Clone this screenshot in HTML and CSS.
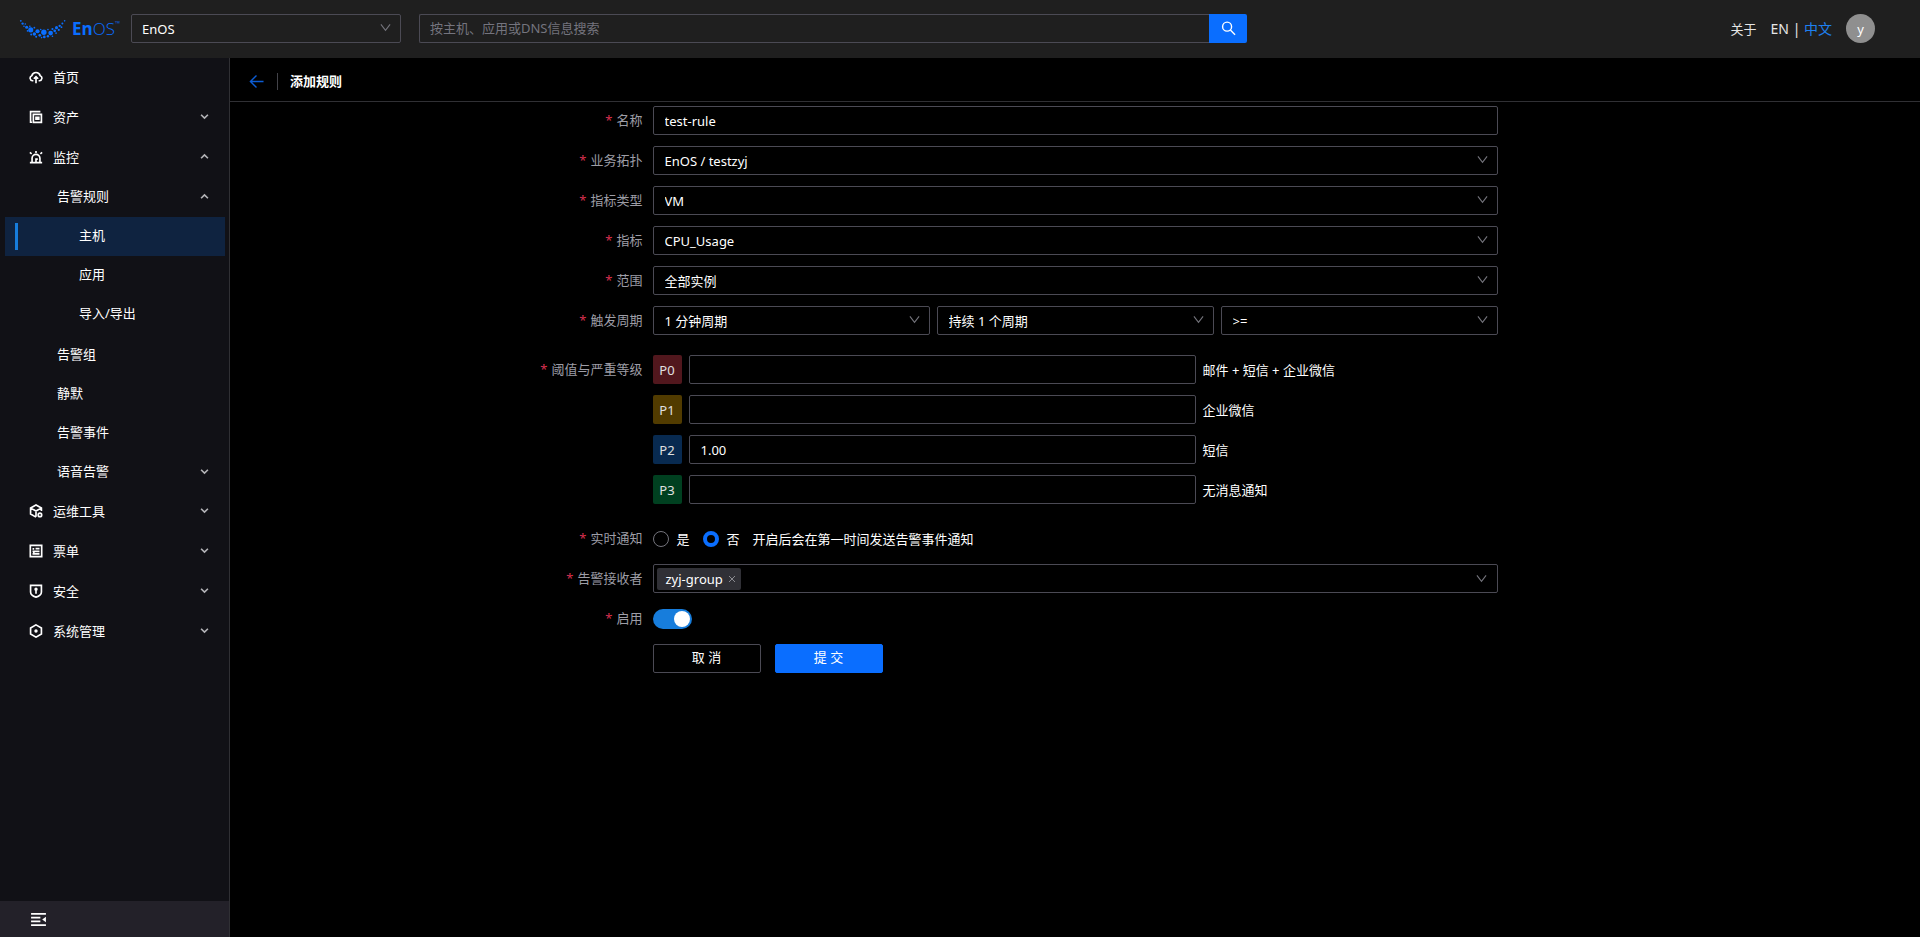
FILE: index.html
```html
<!DOCTYPE html>
<html lang="zh-CN">
<head>
<meta charset="utf-8">
<meta name="viewport" content="width=device-width, initial-scale=1">
<title>添加规则 - EnOS</title>
<link rel="stylesheet" href="styles.css">
</head>
<body>
<svg class="sprite" aria-hidden="true">
  <symbol id="chevron" viewBox="0 0 12 12"><path d="M1 2.500 6 9l5-6.500" fill="none" stroke="currentColor" stroke-width="1.200"/></symbol>
  <symbol id="caret" viewBox="0 0 10 10"><path d="M1.200 3 5 6.800 8.800 3" fill="none" stroke="currentColor" stroke-width="1.800"/></symbol>
</svg>
<header class="topbar">
  <a class="logo" href="#" aria-label="EnOS">
    <svg class="logo-mark" viewBox="0 0 52 22" fill="currentColor">
      <circle cx="2" cy="2" r="1"/><circle cx="4" cy="5" r="1.300"/><circle cx="7" cy="5.500" r=".9"/><circle cx="5.500" cy="8" r=".9"/><circle cx="8.500" cy="9" r="1.700"/><circle cx="12" cy="8" r=".9"/><circle cx="9.500" cy="13" r="1"/><circle cx="13" cy="12" r="2.800"/><circle cx="17" cy="9.500" r="1"/><circle cx="13.500" cy="17" r="1.100"/><circle cx="17" cy="16.500" r="1.900"/><circle cx="20.500" cy="13.500" r="2.300"/><circle cx="19" cy="19.500" r="1.100"/><circle cx="23" cy="18" r="1.500"/><circle cx="24" cy="11.500" r=".9"/><circle cx="27.500" cy="14.500" r="3"/><circle cx="25" cy="20.500" r=".9"/><circle cx="28" cy="19.800" r="1.500"/><circle cx="32" cy="19" r="1.300"/><circle cx="32" cy="11.500" r=".9"/><circle cx="35" cy="15.500" r="2.600"/><circle cx="37" cy="11" r="1.200"/><circle cx="39.500" cy="13" r="1.500"/><circle cx="37" cy="19" r=".9"/><circle cx="41" cy="15.500" r="1"/><circle cx="41.500" cy="9.500" r="1.700"/><circle cx="44" cy="12" r="1.200"/><circle cx="45" cy="7.500" r="1.300"/><circle cx="47" cy="9" r="1"/><circle cx="48" cy="5" r="1.100"/><circle cx="50.500" cy="2" r=".9"/>
    </svg>
    <span class="logo-text"><b>En</b>OS<sup>™</sup></span>
  </a>
  <div class="select topbar-org">
    <select aria-label="组织"><option>EnOS</option></select>
    <svg class="select-arrow"><use href="#chevron"/></svg>
  </div>
  <form class="search" role="search">
    <input type="text" aria-label="搜索" placeholder="按主机、应用或DNS信息搜索">
    <button type="button" aria-label="搜索">
      <svg viewBox="0 0 16 16" fill="none" stroke="currentColor" stroke-width="1.500"><circle cx="6.500" cy="6" r="4.800"/><path d="m10 9.700 5 5"/></svg>
    </button>
  </form>
  <div class="topbar-right">
    <a class="about" href="#">关于</a>
    <span class="lang"><a href="#">EN</a> | <a class="lang-on" href="#">中文</a></span>
    <span class="avatar">y</span>
  </div>
</header>
<div class="body">
  <aside class="sidebar">
    <nav class="menu">
      <a class="item" href="#"><svg class="icon" viewBox="0 0 16 16"><path d="M5 12.300H4A3 3 0 0 1 3.200 6.500a5 5 0 0 1 9.600 0A3 3 0 0 1 12 12.300h-1M8 15V8M5.500 10 8 7.500l2.500 2.500"/></svg>首页</a>
      <a class="item" href="#"><svg class="icon" viewBox="0 0 16 16"><path d="M3.500 14H1.800V1.800H13M5 5h9.200v9.200H5zM8 8.500h3.200v2H8z"/></svg>资产<svg class="caret"><use href="#caret"/></svg></a>
      <a class="item" href="#"><svg class="icon" viewBox="0 0 16 16"><path d="M1 14.500h14M3.500 14V9.500a4.500 4.500 0 0 1 9 0V14M8 3.500V1M3 4.500 1 2.800M13 4.500l2-1.700M8 14v-3.500h2"/></svg>监控<svg class="caret caret-up"><use href="#caret"/></svg></a>
      <a class="item sub" href="#">告警规则<svg class="caret caret-up"><use href="#caret"/></svg></a>
      <div class="submenu">
        <a class="item leaf active" href="#" aria-current="page">主机</a>
        <a class="item leaf" href="#">应用</a>
        <a class="item leaf" href="#">导入/导出</a>
      </div>
      <a class="item sub" href="#">告警组</a>
      <a class="item sub" href="#">静默</a>
      <a class="item sub" href="#">告警事件</a>
      <a class="item sub" href="#">语音告警<svg class="caret"><use href="#caret"/></svg></a>
      <a class="item" href="#"><svg class="icon" viewBox="0 0 16 16"><path d="M8 15 1.800 11.500v-7L8 1.200l6.200 3.300V8M2 4.700 8 8l6-3.300M8 8v6.500"/><circle cx="12.500" cy="12.500" r="2"/></svg>运维工具<svg class="caret"><use href="#caret"/></svg></a>
      <a class="item" href="#"><svg class="icon" viewBox="0 0 16 16"><path d="M1.500 1.500h13v13h-13zM5 4.500v2M7.500 5.300H12M4 8.500h8M4 11.300h8M5.500 8v4"/></svg>票单<svg class="caret"><use href="#caret"/></svg></a>
      <a class="item" href="#"><svg class="icon" viewBox="0 0 16 16"><path d="M1.800 1.500h12.400V9c0 3-3 5-6.200 6-3.200-1-6.200-3-6.200-6z"/><path d="M8 7v4"/><circle cx="8" cy="6" r="1"/></svg>安全<svg class="caret"><use href="#caret"/></svg></a>
      <a class="item" href="#"><svg class="icon" viewBox="0 0 16 16"><path d="m8 1 6.200 3.500v7L8 15l-6.200-3.500v-7z"/><circle cx="8" cy="8" r="1"/></svg>系统管理<svg class="caret"><use href="#caret"/></svg></a>
    </nav>
    <button class="collapse" type="button" aria-label="收起菜单">
      <svg viewBox="0 0 16 14" fill="currentColor"><path d="M0 0h16v2H0zM0 4h10v2H0zM0 8h10v2H0zM0 12h16v2H0zM16 4v6l-4-3z"/></svg>
    </button>
  </aside>
  <main class="content">
    <div class="page-head">
      <button class="back" type="button" aria-label="返回">
        <svg viewBox="0 0 16 16" fill="none" stroke="currentColor" stroke-width="1.500"><path d="M15.500 8H1.500M8 1.500 1.500 8 8 14.500"/></svg>
      </button>
      <span class="divider"></span>
      <h1>添加规则</h1>
    </div>
    <form class="form">
      <div class="row">
        <label for="name">名称</label>
        <div class="field"><input id="name" class="text" type="text" value="test-rule"></div>
      </div>
      <div class="row">
        <label for="topo">业务拓扑</label>
        <div class="field"><div class="select"><select id="topo"><option>EnOS / testzyj</option></select><svg class="select-arrow"><use href="#chevron"/></svg></div></div>
      </div>
      <div class="row">
        <label for="type">指标类型</label>
        <div class="field"><div class="select"><select id="type"><option>VM</option></select><svg class="select-arrow"><use href="#chevron"/></svg></div></div>
      </div>
      <div class="row">
        <label for="metric">指标</label>
        <div class="field"><div class="select"><select id="metric"><option>CPU_Usage</option></select><svg class="select-arrow"><use href="#chevron"/></svg></div></div>
      </div>
      <div class="row">
        <label for="scope">范围</label>
        <div class="field"><div class="select"><select id="scope"><option>全部实例</option></select><svg class="select-arrow"><use href="#chevron"/></svg></div></div>
      </div>
      <div class="row">
        <label for="period">触发周期</label>
        <div class="field">
          <div class="select"><select id="period"><option>1 分钟周期</option></select><svg class="select-arrow"><use href="#chevron"/></svg></div>
          <div class="select"><select aria-label="持续周期"><option>持续 1 个周期</option></select><svg class="select-arrow"><use href="#chevron"/></svg></div>
          <div class="select"><select aria-label="比较符"><option>&gt;=</option></select><svg class="select-arrow"><use href="#chevron"/></svg></div>
        </div>
      </div>
      <div class="levels">
        <div class="row">
          <label for="p0">阈值与严重等级</label>
          <div class="field"><span class="level level-0">P0</span><input id="p0" class="text threshold" type="text"><span>邮件 + 短信 + 企业微信</span></div>
        </div>
        <div class="row">
          <span></span>
          <div class="field"><span class="level level-1">P1</span><input class="text threshold" type="text" aria-label="P1"><span>企业微信</span></div>
        </div>
        <div class="row">
          <span></span>
          <div class="field"><span class="level level-2">P2</span><input class="text threshold" type="text" aria-label="P2" value="1.00"><span>短信</span></div>
        </div>
        <div class="row">
          <span></span>
          <div class="field"><span class="level level-3">P3</span><input class="text threshold" type="text" aria-label="P3"><span>无消息通知</span></div>
        </div>
      </div>
      <div class="row">
        <span class="label" id="notify">实时通知</span>
        <div class="field radios" role="radiogroup" aria-labelledby="notify">
          <label class="radio"><input type="radio" name="notify">是</label>
          <label class="radio"><input type="radio" name="notify" checked>否</label>
          <span>开启后会在第一时间发送告警事件通知</span>
        </div>
      </div>
      <div class="row">
        <label for="receivers">告警接收者</label>
        <div class="field">
          <div class="select tags">
            <span class="tag">zyj-group<button type="button" aria-label="移除 zyj-group"><svg viewBox="0 0 8 8" fill="none" stroke="currentColor"><path d="m1 1 6 6M7 1 1 7"/></svg></button></span>
            <input id="receivers" type="text">
            <svg class="select-arrow"><use href="#chevron"/></svg>
          </div>
        </div>
      </div>
      <div class="row">
        <label for="enabled">启用</label>
        <div class="field"><input id="enabled" class="switch" type="checkbox" role="switch" checked></div>
      </div>
      <div class="row">
        <span></span>
        <div class="field actions">
          <button class="btn" type="button">取 消</button>
          <button class="btn btn-primary" type="button">提 交</button>
        </div>
      </div>
    </form>
  </main>
</div>
</body>
</html>
```
FILE: styles.css
```css
:root {
  --blue: #0a6eff;
  --line: #4b4a54;
  --muted: #9d9da6;
  --control: 29px;
}

*, *::before, *::after { box-sizing: border-box; }

body {
  margin: 0;
  min-height: 100vh;
  display: flex;
  flex-direction: column;
  background: #000;
  color: #fff;
  font: 13px/20px "Noto Sans", "Noto Sans CJK SC", sans-serif;
}

a { color: inherit; text-decoration: none; }
input, select, button { font: inherit; color: inherit; margin: 0; }
button { border: 0; padding: 0; background: none; cursor: pointer; }
svg { display: block; flex: none; }

.sprite { display: none; }

/* Top bar */
.topbar {
  flex: none;
  display: flex;
  align-items: center;
  height: 58px;
  padding: 0 45px 1px 19px;
  background: #1f1f1f;
}

.logo {
  display: flex;
  align-items: center;
  gap: 6px;
  width: 112px;
  color: var(--blue);
}
.logo-mark { width: 47px; height: 20px; }
.logo-text {
  display: flex;
  font: 300 17px/24px "Open Sans", sans-serif;
}
.logo-text b { font-weight: 700; }
.logo-text sup { font-size: 7px; line-height: 14px; }

.search {
  display: flex;
  flex: 0 1 828px;
  height: var(--control);
  margin-left: 18px;
}
.search input {
  flex: 1;
  min-width: 0;
  padding: 0 10px 2px;
  border: 1px solid var(--line);
  border-right: 0;
  border-radius: 2px 0 0 2px;
  background: transparent;
}
.search input::placeholder { color: #74747e; }
.search button {
  display: grid;
  place-items: center;
  width: 38px;
  border-radius: 0 2px 2px 0;
  background: var(--blue);
}
.search button svg { width: 15px; height: 15px; }

.topbar-right {
  display: flex;
  align-items: center;
  gap: 14px;
  margin-left: auto;
  color: #e6e6e6;
}
.lang { font-size: 14px; }
.lang-on { color: #1e80f0; }
.avatar {
  display: grid;
  place-items: center;
  width: var(--control);
  height: var(--control);
  border-radius: 50%;
  background: #8f8f8f;
  color: #fff;
}

/* Sidebar */
.body { flex: 1; display: flex; }

.sidebar {
  flex: none;
  display: flex;
  flex-direction: column;
  width: 230px;
  border-right: 1px solid #303034;
  background: #111116;
}
.menu { flex: 1; }
.submenu { padding-bottom: 2px; }
.item {
  display: flex;
  align-items: center;
  gap: 10px;
  height: 40px;
  margin: 0 4px 0 5px;
  padding: 0 16px 3px 24px;
}
.item.sub { height: 39px; padding-left: 52px; }
.item.leaf { height: 39px; padding-left: 74px; }
.item.active { position: relative; background: #0f2340; }
.item.active::before {
  content: "";
  position: absolute;
  left: 10px;
  top: 6px;
  bottom: 6px;
  width: 3px;
  background: #177ddc;
}
.icon {
  width: 14px;
  height: 14px;
  fill: none;
  stroke: #fff;
  stroke-width: 1.9;
}
.caret { width: 9px; height: 9px; margin-left: auto; color: #b4b4b8; }
.caret-up { transform: rotate(180deg); }

.collapse {
  display: flex;
  align-items: center;
  height: 36px;
  padding-left: 31px;
  background: #232129;
}
.collapse svg { width: 15px; height: 13px; }

/* Page */
.content { flex: 1; min-width: 0; }

.page-head {
  display: flex;
  align-items: center;
  height: 44px;
  padding: 3px 19px 0;
  border-bottom: 1px solid #303034;
}
.back { color: #0c5cd4; }
.back svg { width: 15px; height: 15px; }
.divider { width: 1px; height: 17px; margin: 0 12px 0 13px; background: #434349; }
.page-head h1 { margin: 0; font-size: 13px; line-height: 20px; font-weight: 700; }

/* Form */
.row {
  display: grid;
  grid-template-columns: 25% 50%;
  align-items: center;
  min-height: 40px;
  padding: 4px 0 7px;
}
.row > label, .row > .label {
  padding: 0 10px 2px 0;
  text-align: right;
  color: var(--muted);
}
.row > label::before, .row > .label::before {
  content: "*";
  margin-right: 4px;
  color: #d9304e;
}
.field { display: flex; align-items: center; gap: 7px; }

.text, .select select, .tags {
  height: var(--control);
  border: 1px solid var(--line);
  border-radius: 2px;
  background: transparent;
}
.text, .select select { width: 100%; padding: 0 11px; }
.select { position: relative; flex: 1; min-width: 0; }
.topbar-org { flex: 0 0 270px; }
.topbar-org select { padding: 0 10px; }
.select select { display: block; appearance: none; }
.select option { background: #1f1f1f; }
.select-arrow {
  position: absolute;
  right: 10px;
  top: 8px;
  width: 11px;
  height: 11px;
  color: #74747c;
  pointer-events: none;
}

.levels { padding: 9px 0; }
.level {
  display: grid;
  place-items: center;
  flex: none;
  width: var(--control);
  height: var(--control);
  border-radius: 2px;
  color: #e0e0e0;
}
.level-0 { background: #51171d; }
.level-1 { background: #513b00; }
.level-2 { background: #082a50; }
.level-3 { background: #004020; }
.threshold { flex: none; width: 60%; }

.radios { gap: 13px; }
.radio { display: flex; align-items: center; gap: 8px; }
.radio input {
  appearance: none;
  width: 16px;
  height: 16px;
  border: 1px solid #74747c;
  border-radius: 50%;
}
.radio input:checked { border: 4px solid var(--blue); }

.tags { display: flex; align-items: center; padding: 0 30px 0 3px; }
.tags input {
  flex: 1;
  min-width: 0;
  border: 0;
  outline: 0;
  padding: 0;
  background: transparent;
}
.tag {
  display: flex;
  align-items: center;
  gap: 5px;
  height: 22px;
  padding: 0 5px 0 9px;
  border-radius: 2px;
  background: #303036;
}
.tag button { color: #8a8a90; }
.tag svg { width: 8px; height: 8px; }

.switch {
  appearance: none;
  display: flex;
  width: 39px;
  height: 20px;
  padding: 2px;
  border-radius: 10px;
  background: #434349;
}
.switch::before {
  content: "";
  width: 16px;
  height: 16px;
  border-radius: 50%;
  background: #fff;
}
.switch:checked { justify-content: flex-end; background: #177ddc; }

.actions { gap: 14px; }
.btn {
  width: 108px;
  height: var(--control);
  padding-bottom: 3px;
  border: 1px solid var(--line);
  border-radius: 2px;
}
.btn-primary { border-color: var(--blue); background: var(--blue); }
```
